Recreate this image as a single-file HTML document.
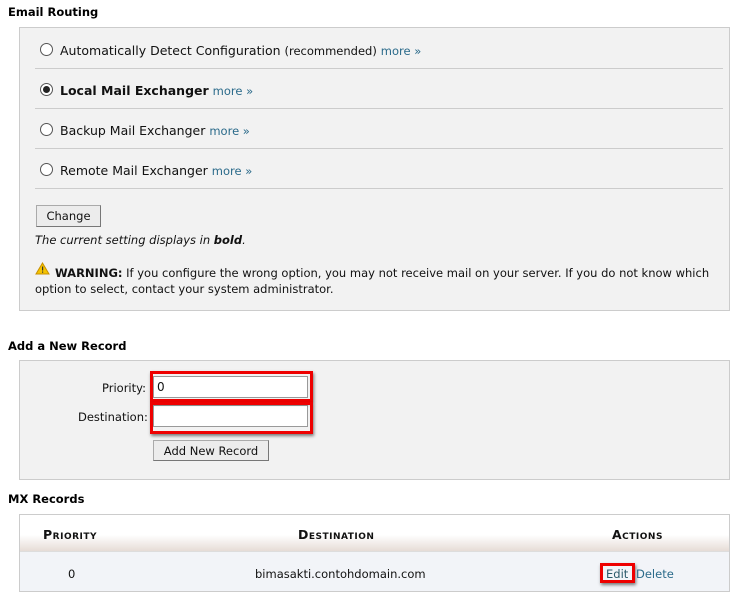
<!DOCTYPE html>
<html><head><meta charset="utf-8"><style>
*{margin:0;padding:0;box-sizing:border-box}
body{width:748px;height:601px;background:#fff;font-family:"DejaVu Sans",Verdana,sans-serif;font-size:12px;color:#111;position:relative;overflow:hidden}
.a{position:absolute;white-space:nowrap}
h3{position:absolute;font-size:11.5px;font-weight:bold;left:8px;color:#000}
.box{position:absolute;left:19px;width:711px;background:#f2f2f2;border:1px solid #ccc}
.sep{position:absolute;left:35px;width:688px;height:1px;background:#ccc}
.radio{position:absolute;width:13px;height:13px;border:1px solid #555;border-radius:50%;background:#fff}
.radio.on::after{content:"";position:absolute;left:2px;top:2px;width:7px;height:7px;border-radius:50%;background:#222}
.more{color:#2a6a8a;font-size:11.5px}
.btn{position:absolute;background:#ececec;border:1px solid #aaa;border-right-color:#777;border-bottom-color:#777;font-size:11.5px;text-align:center;line-height:19px}
.inp{position:absolute;background:#fff;border:1px solid #999;left:153px;width:155px;font-size:12px;padding-left:3px}
.red{position:absolute;border:3px solid #e00;box-shadow:1px 2px 3px rgba(0,0,0,.5)}
.th{position:absolute;font-weight:bold;font-variant:small-caps;font-size:12.5px;letter-spacing:.5px;color:#111}
</style></head><body>
<h3 style="top:5px">Email Routing</h3>
<div class="box" style="top:27px;height:284px"></div>
<div class="radio" style="left:40px;top:43px"></div>
<div class="a" style="left:60px;top:43px;font-size:12.5px">Automatically Detect Configuration <span style="font-size:11.5px">(recommended)</span> <span class="more">more »</span></div>
<div class="sep" style="top:68px"></div>
<div class="radio on" style="left:40px;top:83px"></div>
<div class="a" style="left:60px;top:83px;font-size:12.5px"><b>Local Mail Exchanger</b> <span class="more">more »</span></div>
<div class="sep" style="top:108px"></div>
<div class="radio" style="left:40px;top:123px"></div>
<div class="a" style="left:60px;top:123px;font-size:12.5px">Backup Mail Exchanger <span class="more">more »</span></div>
<div class="sep" style="top:148px"></div>
<div class="radio" style="left:40px;top:163px"></div>
<div class="a" style="left:60px;top:163px;font-size:12.5px">Remote Mail Exchanger <span class="more">more »</span></div>
<div class="sep" style="top:188px"></div>
<div class="btn" style="left:36px;top:205px;width:65px;height:22px;line-height:21px">Change</div>
<div class="a" style="left:35px;top:233px;font-style:italic;font-size:11.5px">The current setting displays in <b>bold</b>.</div>
<svg class="a" style="left:35px;top:262px" width="15" height="13" viewBox="0 0 15 13"><path d="M7.5 1 L14 12 L1 12 Z" fill="#f5c400" stroke="#c89000"/><rect x="7" y="4.5" width="1.2" height="4" fill="#333"/><rect x="7" y="9.5" width="1.2" height="1.2" fill="#333"/></svg>
<div class="a" style="left:55px;top:266px;font-size:11.5px"><b>WARNING:</b> If you configure the wrong option, you may not receive mail on your server. If you do not know which</div>
<div class="a" style="left:35px;top:282px;font-size:11.5px">option to select, contact your system administrator.</div>

<h3 style="top:339px">Add a New Record</h3>
<div class="box" style="top:360px;height:120px"></div>
<div class="a" style="left:102px;top:381px;font-size:11.5px">Priority:</div>
<div class="a" style="left:78px;top:410px;font-size:11.5px">Destination:</div>
<div class="inp" style="top:376px;height:22px;line-height:20px">0</div>
<div class="inp" style="top:405px;height:22px"></div>
<div class="red" style="left:150px;top:371px;width:163px;height:31px"></div>
<div class="red" style="left:150px;top:402px;width:163px;height:32px"></div>
<div class="btn" style="left:153px;top:440px;width:116px;height:21px;line-height:20px">Add New Record</div>

<h3 style="top:492px">MX Records</h3>
<div class="a" style="left:19px;top:514px;width:711px;height:78px;border:1px solid #ccc;background:#f2f4f8"></div>
<div class="a" style="left:20px;top:515px;width:709px;height:37px;background:linear-gradient(#fff 0%,#fff 55%,#e6dcd6 100%);border-bottom:1px solid #ddd"></div>
<div class="th" style="left:43px;top:527px">Priority</div>
<div class="th" style="left:298px;top:527px">Destination</div>
<div class="th" style="left:612px;top:527px">Actions</div>
<div class="a" style="left:68px;top:567px;font-size:11.5px">0</div>
<div class="a" style="left:255px;top:567px;font-size:11.5px">bimasakti.contohdomain.com</div>
<div class="red" style="left:600px;top:563px;width:35px;height:20px;border-width:3px"></div>
<div class="a" style="left:606px;top:567px;font-size:11.5px;color:#2a5a6a">Edit</div>
<div class="a" style="left:636px;top:567px;font-size:11.5px;color:#2a6a8a">Delete</div>
</body></html>
